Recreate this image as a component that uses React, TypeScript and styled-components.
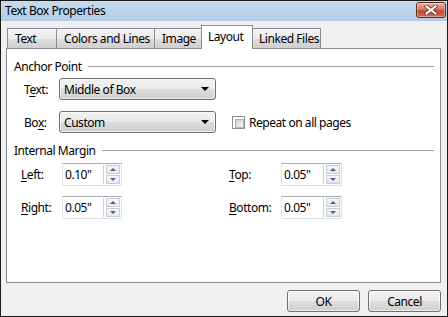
import styled, { createGlobalStyle } from "styled-components";

const GlobalStyle = createGlobalStyle`
  html, body {
    margin: 0;
    padding: 0;
    background: #f0f0f0;
    overflow: hidden;
  }
  * {
    box-sizing: border-box;
  }
`;

const Window = styled.div`
  width: 448px;
  height: 317px;
  border: 1px solid #1b1b1b;
  display: flex;
  flex-direction: column;
  font-family: "Noto Sans", "Open Sans", sans-serif;
  font-size: 12px;
  letter-spacing: -0.45px;
  color: #000;
  background: #f0f0f0;
`;

const TitleBar = styled.div`
  height: 20px;
  display: flex;
  align-items: flex-start;
  justify-content: space-between;
  background: linear-gradient(#c6dbf1, #b3cbe7);
  padding-left: 4px;
`;

const Title = styled.span`
  line-height: 19px;
  font-size: 12px;
`;

const CloseButton = styled.div`
  width: 30px;
  height: 16px;
  margin: 1px 1px 0 0;
  border: 1px solid #5e2b24;
  border-radius: 3px;
  background: linear-gradient(#eab0a2, #d47a66 45%, #c04a30 55%, #d46a50);
  display: flex;
  align-items: center;
  justify-content: center;
  box-shadow: inset 0 0 0 1px rgba(255, 255, 255, 0.35);
`;

const Body = styled.div`
  flex: 1;
  display: flex;
  flex-direction: column;
  padding: 5px 6px 4px 5px;
`;

const TabStrip = styled.div`
  height: 23px;
  display: flex;
  align-items: flex-end;
  margin-bottom: -1px;
  position: relative;
  z-index: 1;
`;

const Tab = styled.div<{ $w: number; $active?: boolean }>`
  width: ${(p) => p.$w}px;
  height: ${(p) => (p.$active ? 24 : 21)}px;
  margin-left: -1px;
  margin-right: ${(p) => (p.$active ? -1 : 0)}px;
  padding-left: ${(p) => (p.$active ? 6 : 7)}px;
  line-height: ${(p) => (p.$active ? 22 : 20)}px;
  border: 1px solid #898c95;
  border-bottom: ${(p) => (p.$active ? "none" : "1px solid #898c95")};
  background: ${(p) =>
    p.$active ? "#ffffff" : "linear-gradient(#f3f3f3, #ebebeb 50%, #dddddd 51%, #cfcfcf)"};
  position: relative;
  z-index: ${(p) => (p.$active ? 2 : 1)};
  white-space: nowrap;
  &:first-child {
    margin-left: 1px;
  }
`;

const Panel = styled.div`
  flex: 1;
  background: #fff;
  border: 1px solid #898c95;
  padding: 10px 6px 0 7px;
  display: flex;
  flex-direction: column;
`;

const GroupHeader = styled.div<{ $gap?: number }>`
  display: flex;
  align-items: center;
  gap: 6px;
  height: 15px;
  margin-top: ${(p) => p.$gap ?? 0}px;
  &::after {
    content: "";
    flex: 1;
    height: 1px;
    background: #a0a0a0;
  }
`;

const Row = styled.div<{ $top: number; $indent?: number }>`
  display: flex;
  align-items: center;
  margin-top: ${(p) => p.$top}px;
  padding-left: ${(p) => p.$indent ?? 10}px;
`;

const Label = styled.span<{ $w: number }>`
  width: ${(p) => p.$w}px;
  flex-shrink: 0;
`;

const Key = styled.span`
  text-decoration: underline;
  text-underline-offset: 2px;
`;

const Combo = styled.div`
  width: 157px;
  height: 22px;
  border: 1px solid #707070;
  border-radius: 3px;
  background: linear-gradient(#f2f2f2, #ebebeb 50%, #dddddd 51%, #cfcfcf);
  display: flex;
  align-items: center;
  justify-content: space-between;
  padding: 0 6px 0 4px;
  box-shadow: inset 0 0 0 1px rgba(255, 255, 255, 0.6);
`;

const Arrow = styled.span`
  width: 0;
  height: 0;
  border-left: 4px solid transparent;
  border-right: 4px solid transparent;
  border-top: 4px solid #000;
`;

const CheckLabel = styled.label`
  display: flex;
  align-items: center;
  gap: 4px;
  margin-left: 16px;
`;

const CheckBox = styled.span`
  width: 13px;
  height: 13px;
  border: 1px solid #8e8f8f;
  background: #fff;
  padding: 2px;
  &::before {
    content: "";
    display: block;
    width: 100%;
    height: 100%;
    background: linear-gradient(135deg, #cbcfd5, #f6f6f6);
    border: 1px solid #aeb3b9;
  }
`;

const Field = styled.div<{ $left: number }>`
  display: flex;
  align-items: center;
  margin-left: ${(p) => p.$left}px;
`;

const Spin = styled.div<{ $w: number }>`
  width: ${(p) => p.$w}px;
  height: 23px;
  border: 1px solid #dbdfe6;
  border-top-color: #abadb3;
  border-left-color: #e2e3ea;
  background: #fff;
  display: flex;
  align-items: center;
  padding-left: 2px;
  justify-content: space-between;
`;

const SpinButtons = styled.div`
  display: flex;
  flex-direction: column;
  gap: 1px;
  height: 19px;
  border-left: 1px solid #c9ced6;
  padding: 0 1px 0 2px;
`;

const SpinBtn = styled.div<{ $up?: boolean }>`
  width: 14px;
  height: 9px;
  border: 1px solid #c7cdd6;
  background: linear-gradient(#f5f7fa, #e3e8ef);
  display: flex;
  align-items: center;
  justify-content: center;
  &::before {
    content: "";
    border-left: 3px solid transparent;
    border-right: 3px solid transparent;
    ${(p) => (p.$up ? "border-bottom: 3px solid #4d6185;" : "border-top: 3px solid #4d6185;")}
  }
`;

const Footer = styled.div`
  display: flex;
  justify-content: flex-end;
  gap: 8px;
  margin-top: 7px;
`;

const Button = styled.div`
  width: 73px;
  height: 22px;
  border: 1px solid #707070;
  border-radius: 3px;
  background: linear-gradient(#f2f2f2, #ebebeb 50%, #dddddd 51%, #cfcfcf);
  box-shadow: inset 0 0 0 1px rgba(255, 255, 255, 0.6);
  display: flex;
  align-items: center;
  justify-content: center;
`;

const SpinField = ({ value, w }: { value: string; w: number }) => (
  <Spin $w={w}>
    <span>{value}</span>
    <SpinButtons>
      <SpinBtn $up />
      <SpinBtn />
    </SpinButtons>
  </Spin>
);

const App = () => {
  return (
    <>
      <GlobalStyle />
      <Window>
        <TitleBar>
          <Title>Text Box Properties</Title>
          <CloseButton>
            <svg width="14" height="10" viewBox="0 0 14 10">
              <path
                d="M2.5 1.5 L11.5 8.5 M11.5 1.5 L2.5 8.5"
                stroke="#6a2d24"
                strokeWidth="3.6"
                strokeLinecap="square"
              />
              <path
                d="M2.5 1.5 L11.5 8.5 M11.5 1.5 L2.5 8.5"
                stroke="#ffffff"
                strokeWidth="2.2"
                strokeLinecap="square"
              />
            </svg>
          </CloseButton>
        </TitleBar>
        <Body>
          <TabStrip>
            <Tab $w={50}>Text</Tab>
            <Tab $w={99}>Colors and Lines</Tab>
            <Tab $w={48}>Image</Tab>
            <Tab $w={52} $active>
              Layout
            </Tab>
            <Tab $w={70}>Linked Files</Tab>
          </TabStrip>
          <Panel>
            <GroupHeader>Anchor Point</GroupHeader>
            <Row $top={4}>
              <Label $w={35}>
                T<Key>e</Key>xt:
              </Label>
              <Combo>
                <span>Middle of Box</span>
                <Arrow />
              </Combo>
            </Row>
            <Row $top={11}>
              <Label $w={35}>
                Bo<Key>x</Key>:
              </Label>
              <Combo>
                <span>Custom</span>
                <Arrow />
              </Combo>
              <CheckLabel>
                <CheckBox />
                Repeat on all pages
              </CheckLabel>
            </Row>
            <GroupHeader $gap={10}>Internal Margin</GroupHeader>
            <Row $top={5} $indent={7}>
              <Field $left={0}>
                <Label $w={41}>
                  <Key>L</Key>eft:
                </Label>
                <SpinField value={'0.10"'} w={60} />
              </Field>
              <Field $left={107}>
                <Label $w={52}>
                  <Key>T</Key>op:
                </Label>
                <SpinField value={'0.05"'} w={61} />
              </Field>
            </Row>
            <Row $top={10} $indent={7}>
              <Field $left={0}>
                <Label $w={41}>
                  <Key>R</Key>ight:
                </Label>
                <SpinField value={'0.05"'} w={60} />
              </Field>
              <Field $left={107}>
                <Label $w={52}>
                  <Key>B</Key>ottom:
                </Label>
                <SpinField value={'0.05"'} w={61} />
              </Field>
            </Row>
          </Panel>
          <Footer>
            <Button>OK</Button>
            <Button>Cancel</Button>
          </Footer>
        </Body>
      </Window>
    </>
  );
};

export default App;
